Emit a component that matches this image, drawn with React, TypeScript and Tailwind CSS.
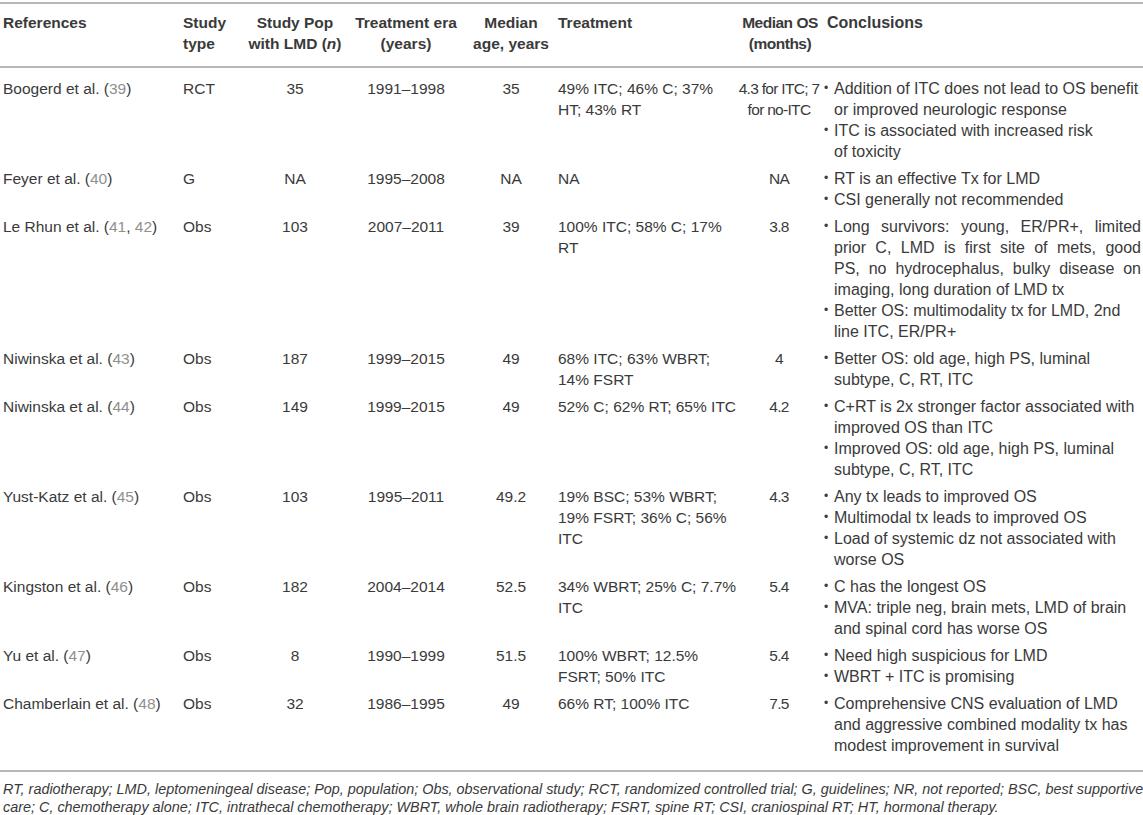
import React from "react";

type Bullet = { lines: string[]; justify?: boolean };
type Row = {
  ref: string;
  cites: string[];
  type: string;
  pop: string;
  era: string;
  age: string;
  tx: string[];
  os: string[];
  concl: Bullet[];
};

const rows: Row[] = [
  {
    ref: "Boogerd et al.",
    cites: ["39"],
    type: "RCT",
    pop: "35",
    era: "1991–1998",
    age: "35",
    tx: ["49% ITC; 46% C; 37%", "HT; 43% RT"],
    os: ["4.3 for ITC; 7", "for no-ITC"],
    concl: [
      { lines: ["Addition of ITC does not lead to OS benefit", "or improved neurologic response"] },
      { lines: ["ITC is associated with increased risk", "of toxicity"] },
    ],
  },
  {
    ref: "Feyer et al.",
    cites: ["40"],
    type: "G",
    pop: "NA",
    era: "1995–2008",
    age: "NA",
    tx: ["NA"],
    os: ["NA"],
    concl: [{ lines: ["RT is an effective Tx for LMD"] }, { lines: ["CSI generally not recommended"] }],
  },
  {
    ref: "Le Rhun et al.",
    cites: ["41", "42"],
    type: "Obs",
    pop: "103",
    era: "2007–2011",
    age: "39",
    tx: ["100% ITC; 58% C; 17%", "RT"],
    os: ["3.8"],
    concl: [
      {
        lines: [
          "Long survivors: young, ER/PR+, limited",
          "prior C, LMD is first site of mets, good",
          "PS, no hydrocephalus, bulky disease on",
          "imaging, long duration of LMD tx",
        ],
        justify: true,
      },
      { lines: ["Better OS: multimodality tx for LMD, 2nd", "line ITC, ER/PR+"] },
    ],
  },
  {
    ref: "Niwinska et al.",
    cites: ["43"],
    type: "Obs",
    pop: "187",
    era: "1999–2015",
    age: "49",
    tx: ["68% ITC; 63% WBRT;", "14% FSRT"],
    os: ["4"],
    concl: [{ lines: ["Better OS: old age, high PS, luminal", "subtype, C, RT, ITC"] }],
  },
  {
    ref: "Niwinska et al.",
    cites: ["44"],
    type: "Obs",
    pop: "149",
    era: "1999–2015",
    age: "49",
    tx: ["52% C; 62% RT; 65% ITC"],
    os: ["4.2"],
    concl: [
      { lines: ["C+RT is 2x stronger factor associated with", "improved OS than ITC"] },
      { lines: ["Improved OS: old age, high PS, luminal", "subtype, C, RT, ITC"] },
    ],
  },
  {
    ref: "Yust-Katz et al.",
    cites: ["45"],
    type: "Obs",
    pop: "103",
    era: "1995–2011",
    age: "49.2",
    tx: ["19% BSC; 53% WBRT;", "19% FSRT; 36% C; 56%", "ITC"],
    os: ["4.3"],
    concl: [
      { lines: ["Any tx leads to improved OS"] },
      { lines: ["Multimodal tx leads to improved OS"] },
      { lines: ["Load of systemic dz not associated with", "worse OS"] },
    ],
  },
  {
    ref: "Kingston et al.",
    cites: ["46"],
    type: "Obs",
    pop: "182",
    era: "2004–2014",
    age: "52.5",
    tx: ["34% WBRT; 25% C; 7.7%", "ITC"],
    os: ["5.4"],
    concl: [
      { lines: ["C has the longest OS"] },
      { lines: ["MVA: triple neg, brain mets, LMD of brain", "and spinal cord has worse OS"] },
    ],
  },
  {
    ref: "Yu et al.",
    cites: ["47"],
    type: "Obs",
    pop: "8",
    era: "1990–1999",
    age: "51.5",
    tx: ["100% WBRT; 12.5%", "FSRT; 50% ITC"],
    os: ["5.4"],
    concl: [{ lines: ["Need high suspicious for LMD"] }, { lines: ["WBRT + ITC is promising"] }],
  },
  {
    ref: "Chamberlain et al.",
    cites: ["48"],
    type: "Obs",
    pop: "32",
    era: "1986–1995",
    age: "49",
    tx: ["66% RT; 100% ITC"],
    os: ["7.5"],
    concl: [
      {
        lines: [
          "Comprehensive CNS evaluation of LMD",
          "and aggressive combined modality tx has",
          "modest improvement in survival",
        ],
      },
    ],
  },
];

function Lines({ lines }: { lines: string[] }) {
  return (
    <>
      {lines.map((l, i) => (
        <div key={i} className="whitespace-nowrap">
          {l}
        </div>
      ))}
    </>
  );
}

export default function App() {
  const th = "align-top font-bold pt-[8px] pb-[12px] leading-[21px]";
  return (
    <div className="w-[1143px] bg-white pt-[2px] text-[#3a3a3a] text-[15.5px] leading-[21px] [font-family:'Liberation_Sans',Arial,sans-serif]">
      <table className="w-[1143px] table-fixed border-collapse">
        <colgroup>
          <col className="w-[180px]" />
          <col className="w-[68px]" />
          <col className="w-[94px]" />
          <col className="w-[128px]" />
          <col className="w-[82px]" />
          <col className="w-[186px]" />
          <col className="w-[84px]" />
          <col className="w-[321px]" />
        </colgroup>
        <thead>
          <tr className="border-t-2 border-b-2 border-[#b8b8b8]">
            <th className={`${th} text-left pl-[3px]`}>References</th>
            <th className={`${th} text-left pl-[3px]`}>
              Study
              <br />
              type
            </th>
            <th className={`${th} text-center whitespace-nowrap`}>
              Study Pop
              <br />
              with LMD (<i>n</i>)
            </th>
            <th className={`${th} text-center whitespace-nowrap`}>
              Treatment era
              <br />
              (years)
            </th>
            <th className={`${th} text-center whitespace-nowrap`}>
              Median
              <br />
              age, years
            </th>
            <th className={`${th} text-left pl-[6px]`}>Treatment</th>
            <th className={`${th} text-center whitespace-nowrap tracking-[-0.5px]`}>
              Median OS
              <br />
              (months)
            </th>
            <th className={`${th} text-left pl-[5px] text-[16px]`}>Conclusions</th>
          </tr>
        </thead>
        <tbody>
          {rows.map((r, idx) => {
            const pad =
              idx === 0 ? "pt-[10px] pb-[3px]" : idx === rows.length - 1 ? "pt-[3px] pb-[14px]" : "py-[3px]";
            const td = `align-top ${pad}`;
            return (
              <tr key={idx} className={idx === rows.length - 1 ? "border-b-2 border-[#b8b8b8]" : ""}>
                <td className={`${td} pl-[3px] whitespace-nowrap`}>
                  {r.ref} (
                  {r.cites.map((c, i) => (
                    <span key={c}>
                      {i > 0 && ", "}
                      <span className="text-[#8f8f8f]">{c}</span>
                    </span>
                  ))}
                  )
                </td>
                <td className={`${td} pl-[3px]`}>{r.type}</td>
                <td className={`${td} text-center`}>{r.pop}</td>
                <td className={`${td} text-center`}>{r.era}</td>
                <td className={`${td} text-center`}>{r.age}</td>
                <td className={`${td} pl-[6px]`}>
                  <Lines lines={r.tx} />
                </td>
                <td className={`${td} text-center tracking-[-0.7px] pr-[2px]`}>
                  <Lines lines={r.os} />
                </td>
                <td className={`${td} pl-[2px] text-[16px]`}>
                  {r.concl.map((b, bi) => (
                    <div key={bi} className="flex">
                      <span className="w-[10px] shrink-0 text-[12px]">•</span>
                      <div className="w-[307px]">
                        {b.lines.map((l, li) => (
                          <div
                            key={li}
                            className={
                              b.justify && li < b.lines.length - 1
                                ? "text-justify [text-align-last:justify]"
                                : "whitespace-nowrap"
                            }
                          >
                            {l}
                          </div>
                        ))}
                      </div>
                    </div>
                  ))}
                </td>
              </tr>
            );
          })}
        </tbody>
      </table>
      <div className="pt-[8px] pl-[3px] text-[14.4px] leading-[18px] italic">
        <div className="whitespace-nowrap">
          RT, radiotherapy; LMD, leptomeningeal disease; Pop, population; Obs, observational study; RCT, randomized
          controlled trial; G, guidelines; NR, not reported; BSC, best supportive
        </div>
        <div className="whitespace-nowrap">
          care; C, chemotherapy alone; ITC, intrathecal chemotherapy; WBRT, whole brain radiotherapy; FSRT, spine RT;
          CSI, craniospinal RT; HT, hormonal therapy.
        </div>
      </div>
    </div>
  );
}
